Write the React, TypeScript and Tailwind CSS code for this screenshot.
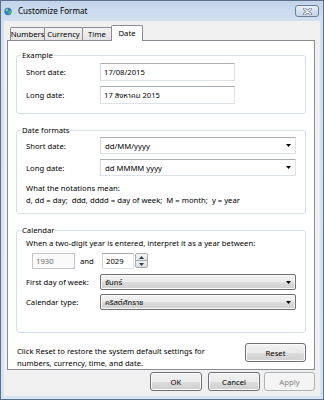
import React from "react";

const Arrow = () => (
  <svg width="5" height="3" viewBox="0 0 5 3" className="shrink-0">
    <path d="M0 0H5L2.5 3Z" fill="#000" />
  </svg>
);

function TextBox({ value, w }: { value: string; w: string }) {
  return (
    <div
      className={`${w} h-[18px] flex items-center pl-[3px] bg-white border border-[#dde2e9] border-t-[#abadb3] border-l-[#d4d7de]`}
    >
      {value}
    </div>
  );
}

function Combo({ value }: { value: string }) {
  return (
    <div className="w-[196px] h-[17px] flex items-center pl-[4px] pr-[4px] bg-white border border-[#dde2e9] border-t-[#abadb3] border-l-[#d4d7de]">
      <span className="flex-1">{value}</span>
      <Arrow />
    </div>
  );
}

function DropList({ value }: { value: string }) {
  return (
    <div className="w-[196px] h-[16px] flex items-center pl-[4px] pr-[4px] rounded-[2px] border border-[#707070] bg-[linear-gradient(180deg,#f2f2f2_0%,#ebebeb_50%,#dddddd_50%,#cfcfcf_100%)] shadow-[inset_0_0_0_1px_#fbfbfb]">
      <span className="flex-1">{value}</span>
      <Arrow />
    </div>
  );
}

function Btn({ label, w, disabled }: { label: string; w: string; disabled?: boolean }) {
  return (
    <div
      className={
        disabled
          ? `${w} h-[19px] flex items-center justify-center rounded-[3px] border border-[#adb2b5] bg-[#f4f4f4] text-[#838383]`
          : `${w} h-[19px] flex items-center justify-center rounded-[3px] border border-[#707070] bg-[linear-gradient(180deg,#f2f2f2_0%,#ebebeb_50%,#dddddd_50%,#cfcfcf_100%)] shadow-[inset_0_0_0_1px_#fbfbfb]`
      }
    >
      {label}
    </div>
  );
}

function Group({ title, className, children }: { title: string; className?: string; children: React.ReactNode }) {
  return (
    <fieldset className={`border border-[#d5dfe5] rounded-[3px] m-0 p-0 ${className ?? ""}`}>
      <legend className="ml-[4px] px-[1px] leading-[12px]">{title}</legend>
      {children}
    </fieldset>
  );
}

function Tab({ label, w, selected }: { label: string; w: string; selected?: boolean }) {
  if (selected) {
    return (
      <div
        className={`${w} h-[16px] -mb-px relative z-10 flex items-start justify-center pt-[1px] bg-white border border-b-0 border-[#898c95] rounded-t-[2px]`}
      >
        {label}
      </div>
    );
  }
  return (
    <div
      className={`${w} h-[13px] -mr-px flex items-center justify-center bg-[linear-gradient(180deg,#f3f3f3,#e3e3e3)] border border-b-0 border-[#898c95] rounded-t-[2px]`}
    >
      {label}
    </div>
  );
}

export default function App() {
  return (
    <div className="w-[324px] h-[400px] border border-[#5d7089] bg-[linear-gradient(180deg,#c3d5ea_0px,#d2e0f0_20px,#d6e3f2_100%)] flex flex-col font-['Noto_Sans','Noto_Sans_Thai','DejaVu_Sans',sans-serif] text-[7.7px] leading-[12px] text-black overflow-hidden">
      {/* title bar */}
      <div className="h-[20px] flex items-center pl-[3px] pr-[4px] shrink-0">
        <svg width="8" height="9" viewBox="0 0 8 9">
          <circle cx="4" cy="4.5" r="3.7" fill="#2f7fd0" />
          <path d="M1.2 3.2C2 2 3 1.4 4 1.6L3.4 3.2 2.2 4.6Z" fill="#5cbf4a" />
          <path d="M4.6 4.2 6.8 3.6 7 5.6 5.4 7.4 4.4 6Z" fill="#5cbf4a" />
          <circle cx="3" cy="3" r="1.2" fill="#ffffff" opacity="0.35" />
        </svg>
        <span className="ml-[6px] text-[8.1px]">Customize Format</span>
        <div className="ml-auto w-[24px] h-[12px] rounded-[3px] border border-[#6d7f96] bg-[linear-gradient(180deg,#eef3f9,#d3dfee_50%,#c7d6e9)] flex items-center justify-center">
          <svg width="9" height="7" viewBox="0 0 9 7">
            <path d="M1.5 1L7.5 6M7.5 1L1.5 6" stroke="#5f6f84" strokeWidth="2.6" strokeLinecap="round" />
            <path d="M1.5 1L7.5 6M7.5 1L1.5 6" stroke="#ffffff" strokeWidth="1.2" strokeLinecap="round" />
          </svg>
        </div>
      </div>

      {/* client area */}
      <div className="mx-[3px] h-[375px] bg-[#f0f0f0] flex flex-col shrink-0">
        {/* tabs */}
        <div className="h-[19px] flex items-end pl-[6px] shrink-0">
          <Tab label="Numbers" w="w-[35px]" />
          <Tab label="Currency" w="w-[39px]" />
          <Tab label="Time" w="w-[30px]" />
          <Tab label="Date" w="w-[32px]" selected />
        </div>

        {/* panel */}
        <div className="ml-[3px] w-[308px] h-[330px] border border-[#898c95] bg-white px-[8px] pt-[8px] flex flex-col shrink-0">
          <Group title="Example">
            <div className="pt-[2px] pb-[9px] pl-[9px] flex flex-col gap-[5px]">
              <div className="flex items-center h-[18px]">
                <span className="w-[74px]">Short date:</span>
                <TextBox value="17/08/2015" w="w-[135px]" />
              </div>
              <div className="flex items-center h-[18px]">
                <span className="w-[74px]">Long date:</span>
                <TextBox value="17 สิงหาคม 2015" w="w-[135px]" />
              </div>
            </div>
          </Group>

          <Group title="Date formats" className="mt-[10px]">
            <div className="pt-[1px] pb-[7px] pl-[9px] flex flex-col">
              <div className="flex items-center h-[17px]">
                <span className="w-[74px]">Short date:</span>
                <Combo value="dd/MM/yyyy" />
              </div>
              <div className="flex items-center h-[17px] mt-[5px]">
                <span className="w-[74px]">Long date:</span>
                <Combo value="dd MMMM yyyy" />
              </div>
              <div className="mt-[6px]">
                <div>What the notations mean:</div>
                <div className="whitespace-pre">d, dd = day;  ddd, dddd = day of week;  M = month;  y = year</div>
              </div>
            </div>
          </Group>

          <Group title="Calendar" className="mt-[10px]">
            <div className="pt-[1px] pb-[22px] pl-[9px] flex flex-col">
              <div className="h-[12px]">When a two-digit year is entered, interpret it as a year between:</div>
              <div className="mt-[4px] h-[16px] flex items-center pl-[6px]">
                <div className="w-[43px] h-[16px] flex items-center pl-[3px] bg-[#fafafa] border border-[#c3c6cb] text-[#6d6d6d]">
                  1930
                </div>
                <span className="ml-[5px] w-[22px]">and</span>
                <div className="w-[32px] h-[16px] flex items-center pl-[3px] bg-white border border-[#dde2e9] border-t-[#abadb3] border-l-[#d4d7de]">
                  2029
                </div>
                <div className="ml-px w-[13px] h-[16px] flex flex-col">
                  <div className="h-[8px] flex items-center justify-center rounded-t-[2px] border border-[#a7abb0] bg-[linear-gradient(180deg,#f6f6f6,#e2e2e2)]">
                    <svg width="5" height="3" viewBox="0 0 5 3">
                      <path d="M0 3H5L2.5 0Z" fill="#2c3e50" />
                    </svg>
                  </div>
                  <div className="h-[8px] -mt-px flex items-center justify-center rounded-b-[2px] border border-[#a7abb0] bg-[linear-gradient(180deg,#f0f0f0,#dcdcdc)]">
                    <svg width="5" height="3" viewBox="0 0 5 3">
                      <path d="M0 0H5L2.5 3Z" fill="#2c3e50" />
                    </svg>
                  </div>
                </div>
              </div>
              <div className="mt-[5px] flex items-center h-[16px]">
                <span className="w-[74px]">First day of week:</span>
                <DropList value="จันทร์" />
              </div>
              <div className="mt-[4px] flex items-center h-[16px]">
                <span className="w-[74px]">Calendar type:</span>
                <DropList value="คริสต์ศักราช" />
              </div>
            </div>
          </Group>

          <div className="mt-[10px] flex justify-between items-start">
            <div className="pl-[1px] pt-[2px]">
              <div>Click Reset to restore the system default settings for</div>
              <div>numbers, currency, time, and date.</div>
            </div>
            <Btn label="Reset" w="w-[61px]" />
          </div>
        </div>

        {/* buttons */}
        <div className="mt-[2px] flex justify-end pr-[5px]">
          <Btn label="OK" w="w-[52px]" />
          <div className="ml-[6px]">
            <Btn label="Cancel" w="w-[52px]" />
          </div>
          <div className="ml-[4px]">
            <Btn label="Apply" w="w-[51px]" disabled />
          </div>
        </div>
      </div>
    </div>
  );
}
